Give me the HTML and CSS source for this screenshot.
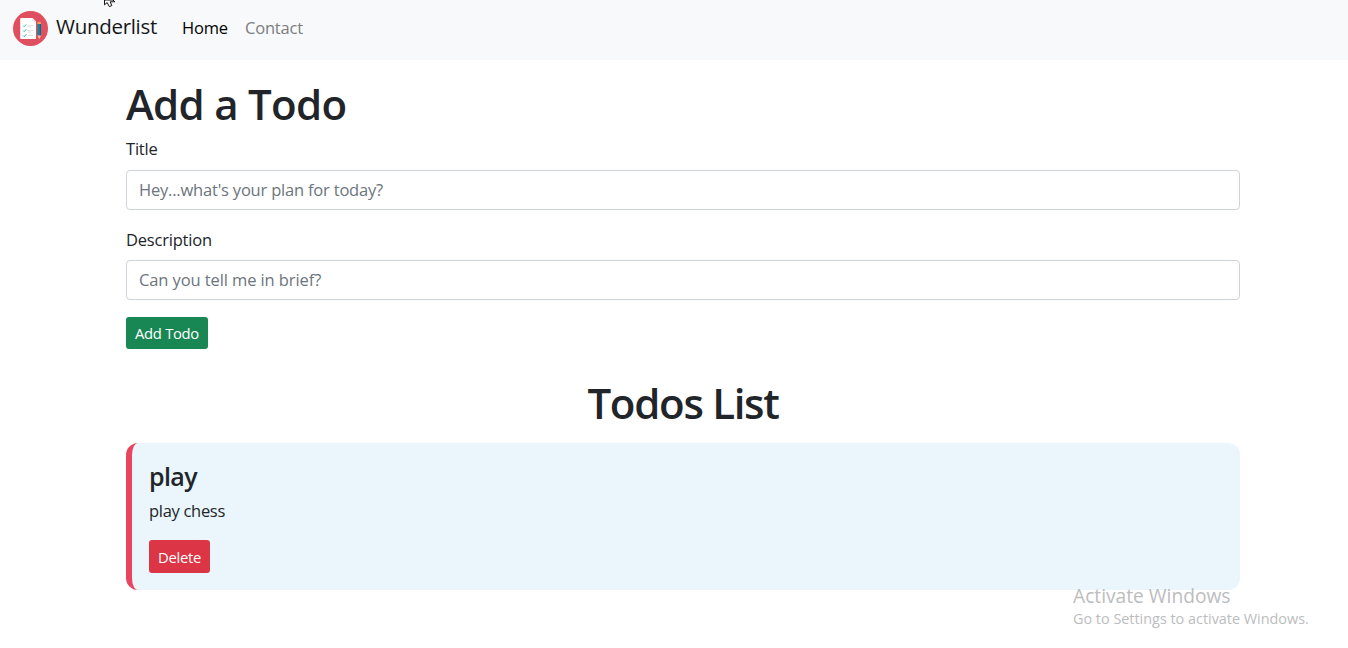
FILE: index.html
```html
<!DOCTYPE html>
<html lang="en">
<head>
<meta charset="utf-8">
<title>Wunderlist</title>
<link rel="stylesheet" href="styles.css">
</head>
<body>
<nav class="navbar">
  <a class="brand">
    <svg class="logo" viewBox="0 0 35 35" aria-hidden="true">
      <circle cx="17.5" cy="17.5" r="17.5" fill="#e04f5f"/>
      <path d="M8 7h11.500l3.500 3.500V28H8q-.8 0-.8-.8V7.800Q7.200 7 8 7z" fill="#fff"/>
      <path d="M19.500 7v3.500H23z" fill="#e3e5e8"/>
      <path d="M14.500 14.500h5.500M14.500 19.500h5.500M14.500 24.500h5.500M14.500 16h3.500M14.500 21h3.500" stroke="#d5d8dc" stroke-width=".8"/>
      <path d="M10 14.500l1.200 1.200 2-2.400M10 19.500l1.200 1.200 2-2.400M10 24.500l1.200 1.200 2-2.400" fill="none" stroke="#32bea6" stroke-width="1"/>
      <path d="M24.500 13H28v11.500h-3.500z" fill="#1085a3"/>
      <path d="M27 13h1v11.500h-1z" fill="#0b6680"/>
      <path d="M24.500 13v-1.500q1.700-1.300 3.500 0V13z" fill="#f0a36c"/>
      <path d="M24.500 24.500H28l-1.750 3.800z" fill="#f2c9a0"/>
    </svg>
    <span class="brand-name">Wunderlist</span>
  </a>
  <a class="nav-link active">Home</a>
  <a class="nav-link contact">Contact</a>
</nav>
<main class="container">
  <h1 class="title add-title">Add a Todo</h1>
  <form class="todo-form">
    <label class="label label-title" for="t">Title</label>
    <input class="input input-title" id="t" placeholder="Hey...what's your plan for today?">
    <label class="label label-desc" for="d">Description</label>
    <input class="input" id="d" placeholder="Can you tell me in brief?">
    <button class="btn btn-add" type="button">Add Todo</button>
  </form>
  <h1 class="title list-title">Todos List</h1>
  <section class="card">
    <h4 class="card-title">play</h4>
    <p class="card-text">play chess</p>
    <button class="btn btn-delete" type="button">Delete</button>
  </section>
</main>
<aside class="watermark">
  <div class="wm-title">Activate Windows</div>
  <div class="wm-text">Go to Settings to activate Windows.</div>
</aside>
<svg class="cursor" viewBox="0 0 12 8" aria-hidden="true">
  <path d="M.5 0V4.800L3.200 2.600 5.300 6.600 7.800 5.600 6.200 1.800H10.800L9 0z" fill="#fff" stroke="#111" stroke-width="1"/>
</svg>
</body>
</html>
```
FILE: styles.css
```css
* { box-sizing: border-box; }
body {
  margin: 0;
  height: 648px;
  overflow: hidden;
  background: #fff;
  color: #212529;
  font: 400 16.5px/25px "Open Sans", "Noto Sans", sans-serif;
  letter-spacing: -0.2px;
}
.navbar {
  display: flex;
  align-items: center;
  height: 60px;
  padding: 0 13px 4px;
  background: #f8f9fa;
}
.brand { display: flex; align-items: center; width: 169px; }
.logo { width: 35px; height: 35px; margin-right: 8px; }
.brand-name { padding-bottom: 4px; font-size: 20.5px; line-height: 30px; color: #151719; letter-spacing: -0.3px; }
.nav-link { width: 63px; padding-bottom: 2px; color: #000; }
.nav-link.contact { color: #7b7d7f; }
.container { width: 1114px; margin: 21px 0 0 126px; }
.title { margin: 0; font-size: 42px; line-height: 46px; font-weight: 600; }
.add-title { letter-spacing: -0.7px; }
.todo-form { display: flex; flex-direction: column; align-items: flex-start; }
.label { line-height: 25px; }
.label-title { margin: 9px 0; }
.label-desc { margin: 17px 0 8px; }
.input {
  width: 100%;
  height: 40px;
  padding: 0 12px 2px;
  border: 1px solid #ced4da;
  border-radius: 4px;
  font: inherit;
  letter-spacing: -0.1px;
}
.input-title { letter-spacing: -0.2px; }
.input::placeholder { color: #6c757d; opacity: 1; }
.btn {
  display: block;
  padding: 1px 0 0;
  border: 0;
  border-radius: 3px;
  color: #fff;
  font: 400 14.8px/31px "Open Sans", "Noto Sans", sans-serif;
  letter-spacing: -0.3px;
}
.btn-add { width: 82px; height: 32px; margin-top: 17px; background: #198754; }
.list-title { margin-top: 31px; text-align: center; letter-spacing: -1.3px; }
.card {
  height: 147px;
  margin-top: 17px;
  padding: 18px 17px;
  border-left: 6px solid #e94560;
  border-radius: 12px;
  background: #eaf6fb;
}
.card-title { margin: 0; font-size: 25px; line-height: 30px; font-weight: 600; letter-spacing: -0.6px; }
.card-text { margin: 7px 0 17px; letter-spacing: -0.3px; }
.btn-delete { width: 61px; height: 33px; background: #dc3545; line-height: 32px; }
.watermark { position: absolute; left: 1073px; top: 583px; color: #bbbdbe; white-space: nowrap; letter-spacing: 0; }
.wm-title { font-size: 19.2px; line-height: 26px; }
.wm-text { font-size: 14.4px; line-height: 20px; }
.cursor { position: absolute; left: 104px; top: 0; width: 12px; height: 8px; }
```
